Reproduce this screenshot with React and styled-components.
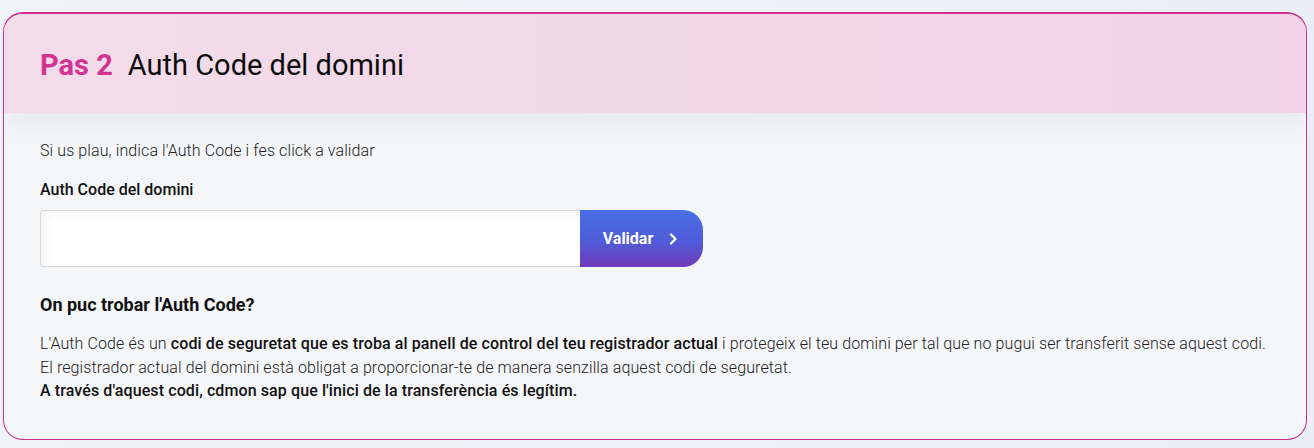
import React from 'react';
import styled, { createGlobalStyle } from 'styled-components';

const GlobalStyle = createGlobalStyle`
  html, body {
    margin: 0;
    padding: 0;
  }
  body {
    font-family: Roboto, "Liberation Sans", sans-serif;
    background: linear-gradient(90deg, #f0f4fa 0%, #e9eef7 100%);
    width: 1314px;
    height: 448px;
    overflow: hidden;
  }
`;

const Page = styled.div`
  padding: 12px 7px 8px 3px;
`;

const Card = styled.section`
  border: 1px solid #d0308f;
  border-top-width: 2px;
  border-radius: 20px;
  overflow: hidden;
  background: #f5f6f8;
  height: 428px;
  box-sizing: border-box;
`;

const Header = styled.header`
  height: 99px;
  display: flex;
  align-items: center;
  padding: 2px 36px 0;
  box-sizing: border-box;
  background: linear-gradient(90deg, #f3dcea 0%, #f2d3e7 100%);
  box-shadow: 0 10px 24px rgba(40, 60, 110, 0.08);
  position: relative;
  z-index: 1;
`;

const Title = styled.h1`
  margin: 0;
  font-size: 29px;
  line-height: 34px;
  font-weight: 400;
  color: #0c0c0c;
`;

const Step = styled.span`
  color: #d23391;
  font-weight: 700;
  margin-right: 15px;
`;

const Body = styled.div`
  padding: 28px 36px 0;
`;

const Intro = styled.p`
  margin: 0;
  font-size: 16px;
  line-height: 19px;
  font-weight: 300;
  letter-spacing: 0.1px;
  color: #222;
`;

const Label = styled.label`
  display: block;
  margin-top: 20px;
  font-size: 16px;
  line-height: 19px;
  font-weight: 500;
  color: #111;
`;

const Field = styled.div`
  display: flex;
  margin-top: 11px;
  width: 663px;
  height: 57px;
`;

const Input = styled.input`
  flex: 1;
  border: 1px solid #d6d6d6;
  border-right: none;
  border-radius: 4px 0 0 4px;
  background: #fff;
  box-shadow: inset 6px 4px 10px rgba(0, 0, 0, 0.04);
  outline: none;
  font: inherit;
  padding: 0 16px;
`;

const Button = styled.button`
  width: 123px;
  border: none;
  border-radius: 0 20px 20px 0;
  background: linear-gradient(180deg, #476fe3 0%, #4f5cd9 55%, #7139b8 100%);
  color: #fff;
  font-family: inherit;
  font-size: 16px;
  font-weight: 700;
  display: flex;
  align-items: center;
  justify-content: center;
  gap: 15px;
  padding: 0 2px 0 0;
  cursor: pointer;
`;

const Heading = styled.h2`
  margin: 27px 0 0;
  font-size: 18px;
  line-height: 21px;
  font-weight: 700;
  color: #111;
`;

const Text = styled.p`
  margin: 17px 0 0;
  font-size: 16px;
  font-weight: 300;
  line-height: 23.5px;
  letter-spacing: 0.1px;
  color: #222;

  b {
    font-weight: 500;
    color: #111;
  }
`;

const Chevron = () => (
  <svg width="10" height="14" viewBox="0 0 10 14" fill="none">
    <path d="M3 2.5 L7.5 7 L3 11.5" stroke="#fff" strokeWidth="2.2" strokeLinecap="round" strokeLinejoin="round" />
  </svg>
);

export default function App() {
  return (
    <>
      <GlobalStyle />
      <Page>
        <Card>
          <Header>
            <Title>
              <Step>Pas 2</Step>Auth Code del domini
            </Title>
          </Header>
          <Body>
            <Intro>Si us plau, indica l'Auth Code i fes click a validar</Intro>
            <Label htmlFor="authcode">Auth Code del domini</Label>
            <Field>
              <Input id="authcode" type="text" />
              <Button>
                Validar <Chevron />
              </Button>
            </Field>
            <Heading>On puc trobar l'Auth Code?</Heading>
            <Text>
              L'Auth Code és un <b>codi de seguretat que es troba al panell de control del teu registrador actual</b> i protegeix el teu domini per tal que no pugui ser transferit sense aquest codi.
              <br />
              El registrador actual del domini està obligat a proporcionar-te de manera senzilla aquest codi de seguretat.
              <br />
              <b>A través d'aquest codi, cdmon sap que l'inici de la transferència és legítim.</b>
            </Text>
          </Body>
        </Card>
      </Page>
    </>
  );
}
